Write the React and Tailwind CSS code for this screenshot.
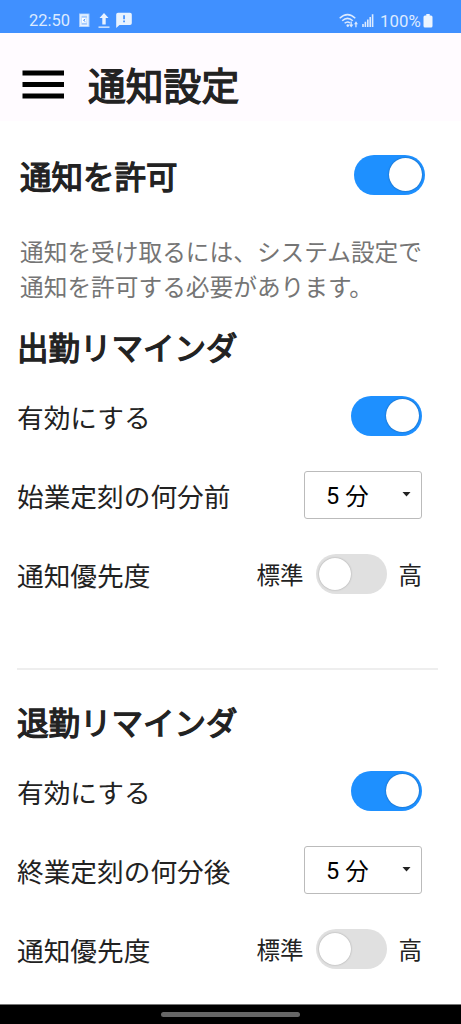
const strong = 'font-normal [-webkit-text-stroke:1.3px_#222] text-[#222]';

function Toggle({ on = false }) {
  return (
    <span
      role="switch"
      aria-checked={on}
      className={
        on
          ? 'flex h-10 w-[71px] shrink-0 items-center justify-end rounded-full bg-[#1e90ff] pr-[3px]'
          : 'flex h-10 w-[71px] shrink-0 items-center justify-start rounded-full bg-[#e0e0e0] pl-[3px]'
      }
    >
      <span
        className={
          on
            ? 'size-[33px] rounded-full bg-white shadow-[0_0_2px_rgba(0,0,0,0.4)]'
            : 'size-[32px] rounded-full bg-white shadow-[0_0_2px_rgba(0,0,0,0.3)]'
        }
      />
    </span>
  );
}

function Row({ label, children }) {
  return (
    <div className="flex h-[79px] items-center justify-between pr-[39px] pl-[17px]">
      <span className="pt-[4px] text-[26.7px] leading-none">{label}</span>
      {children}
    </div>
  );
}

function Reminder({ title, timing }) {
  return (
    <section>
      <h2 className={`flex h-[58px] items-center pl-[17px] text-[31.5px] leading-none ${strong}`}>{title}</h2>
      <Row label="有効にする">
        <Toggle on />
      </Row>
      <Row label={timing}>
        <button className="flex h-[48px] w-[118px] items-center justify-between rounded-[3px] border border-[#bbb] pr-[10px] pl-[21px] text-black">
          <span className="flex items-center gap-[6px] pt-[3px] text-[23.5px] leading-none">
            <span className="pt-[2px] font-[Roboto]">5</span>
            <span>分</span>
          </span>
          <svg width="9" height="5" viewBox="0 0 9 5" className="fill-[#222]">
            <path d="M0.5 0h8L4.5 4.6z" />
          </svg>
        </button>
      </Row>
      <Row label="通知優先度">
        <div className="flex items-center text-[23.5px] leading-none">
          <span className="pt-[2px]">標準</span>
          <span className="mr-[12px] ml-[12px] flex">
            <Toggle />
          </span>
          <span className="pt-[2px]">高</span>
        </div>
      </Row>
    </section>
  );
}

function StatusBar() {
  return (
    <div className="flex h-[33px] items-center bg-[#4090ff] pt-[8px] pr-[28px] pl-[29px] font-[Roboto] text-[16.5px] leading-none text-[#dceaff]">
      <span className="w-[49px] pt-[2px]">22:50</span>
      <svg width="56" height="17" viewBox="0 0 56 17" className="text-[#e9f3ff]">
        <path d="M1 1.5h10.5v13.5H1z" fill="#a3caff" />
        <path d="M2.8 3h7v10.5h-7z" fill="none" stroke="currentColor" strokeWidth="1.4" />
        <rect x="4" y="5.8" width="4.5" height="5" fill="white" />
        <path d="M7.3 7.1 5.5 8.3l1.8 1.2" fill="none" stroke="#4090ff" strokeWidth="1" />
        <path d="M26 1 30.5 6H27.7v6.500h-3.4V6h-2.8z" fill="currentColor" />
        <path d="M20.5 14.500h11v1.3h-11z" fill="currentColor" />
        <path d="M40 .7h12q1.8 0 1.8 1.8v8.7q0 1.8-1.8 1.8H41.5l-3.3 3V2.5Q38.2 .7 40 .7z" fill="currentColor" />
        <path d="M45.2 3.3h1.7v4h-1.7zM45.2 8.6h1.7v1.7h-1.7z" fill="#4090ff" />
      </svg>
      <svg width="36" height="16" viewBox="0 0 36 16" className="mr-[5px] ml-auto">
        <g fill="none" stroke="#dceaff" strokeWidth="1.5">
          <path d="M.7 5.2Q8.5-2 16.3 5.2M3.2 7.8Q8.5 3 13.8 7.8M5.6 10.3Q8.5 7.8 11 10" />
        </g>
        <circle cx="8.8" cy="12.6" r="1.3" fill="#dceaff" />
        <path d="M11.5 8.5h1.3v3h1.6l-2.2 2.9-2.3-2.9h1.6zM16.3 14.2h1.3v-3h1.3L17 8.3l-2 2.9h1.3z" fill="#dceaff" />
        <path d="M23.2 11h1.6v3h-1.6zM25.6 8.8h1.6V14h-1.6zM28 6.5h1.6V14H28zM30.4 4h1.6v10h-1.6zM32.8 1.3h1.6V14h-1.6z" fill="#dceaff" />
      </svg>
      <span className="pt-px text-[16.8px] tracking-[0.1px]">100%</span>
      <svg width="10" height="14" viewBox="0 0 10 14" className="ml-[2px]">
        <path d="M3.3 0h3.4v1.5H8q1.5 0 1.5 1.5v9q0 1.5-1.5 1.5H2Q.5 13.5.5 12V3Q.5 1.5 2 1.5h1.3z" fill="#edf5ff" />
      </svg>
    </div>
  );
}

export default function App() {
  return (
    <div className="flex h-[1024px] w-[461px] flex-col overflow-hidden bg-white font-['Noto_Sans_CJK_JP',sans-serif] text-[#222]">
      <StatusBar />
      <header className="flex h-[88px] items-center gap-[24px] bg-[#fffbff] pt-[16px] pl-[22px]">
        <svg width="42" height="29" viewBox="0 0 42 29" className="mb-[2px]" aria-label="メニュー">
          <path d="M.5 .5h41.500v5H.5zM.5 12h41.500v5H.5zM.5 23.500h41.500v5H.5z" />
        </svg>
        <h1 className={`pb-[2px] text-[37.8px] leading-none ${strong}`}>通知設定</h1>
      </header>
      <main className="flex-1">
        <div className="flex h-[107px] items-center justify-between pr-[36px] pl-[20px]">
          <h2 className={`pt-[3px] text-[31.5px] leading-none ${strong}`}>通知を許可</h2>
          <Toggle on />
        </div>
        <p className="mb-[14px] pt-[6px] pl-[20px] text-[23.7px] leading-[35px] whitespace-nowrap text-[#757575]">
          通知を受け取るには、システム設定で
          <br />
          通知を許可する必要があります。
        </p>
        <Reminder title="出勤リマインダ" timing="始業定刻の何分前" />
        <hr className="mt-[55px] mr-[23px] mb-[23px] ml-[17px] border-t-2 border-[#eee]" />
        <Reminder title="退勤リマインダ" timing="終業定刻の何分後" />
      </main>
      <footer className="flex h-[20px] items-center justify-center border-t border-[#777] bg-black">
        <span className="h-[5px] w-[139px] rounded-full bg-[#666]" />
      </footer>
    </div>
  );
}
